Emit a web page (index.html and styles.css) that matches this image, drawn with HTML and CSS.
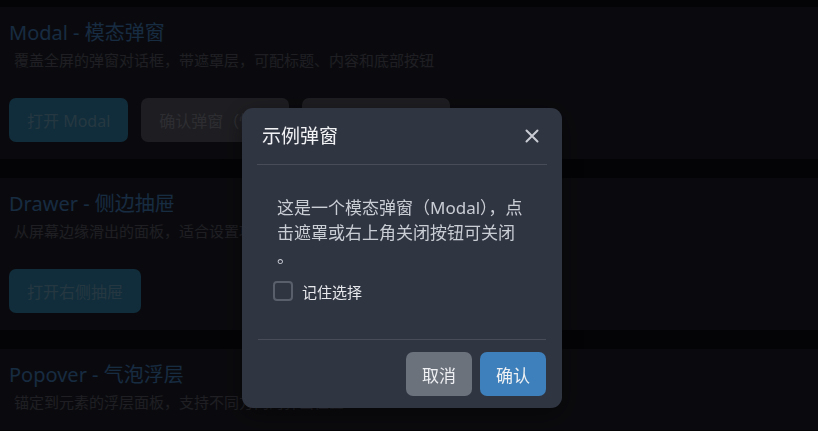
FILE: index.html
```html
<!DOCTYPE html>
<html lang="zh-CN">
<head>
<meta charset="utf-8">
<title>Overlay demo</title>
<link rel="stylesheet" href="styles.css">
</head>
<body>
<main class="page">
  <section class="card">
    <h2 class="card-title">Modal - 模态弹窗</h2>
    <p class="card-desc">覆盖全屏的弹窗对话框，带遮罩层，可配标题、内容和底部按钮</p>
    <div class="btn-row">
      <button class="btn btn-primary">打开 Modal</button>
      <button class="btn btn-muted">确认弹窗（快）</button>
      <button class="btn btn-muted">自定义页脚弹窗</button>
    </div>
  </section>
  <section class="card">
    <h2 class="card-title">Drawer - 侧边抽屉</h2>
    <p class="card-desc">从屏幕边缘滑出的面板，适合设置项、筛选条件等内容展示</p>
    <div class="btn-row">
      <button class="btn btn-primary">打开右侧抽屉</button>
    </div>
  </section>
  <section class="card">
    <h2 class="card-title">Popover - 气泡浮层</h2>
    <p class="card-desc">锚定到元素的浮层面板，支持不同方向的弹出位置</p>
  </section>
</main>

<div class="mask"></div>
<div class="modal" role="dialog">
  <div class="modal-header">
    <span class="modal-title">示例弹窗</span>
    <span class="modal-close" aria-label="关闭">
      <svg width="14" height="14" viewBox="0 0 14 14"><path d="M1.5 1.5 L12.5 12.5 M12.5 1.5 L1.5 12.5" stroke="#c9ccd3" stroke-width="2" stroke-linecap="round" fill="none"/></svg>
    </span>
  </div>
  <div class="modal-body">
    <p class="modal-text">这是一个模态弹窗（Modal），点<br>击遮罩或右上角关闭按钮可关闭<br>。</p>
    <label class="check">
      <span class="check-box"></span>
      <span class="check-label">记住选择</span>
    </label>
  </div>
  <div class="modal-footer">
    <button class="mbtn mbtn-cancel">取消</button>
    <button class="mbtn mbtn-ok">确认</button>
  </div>
</div>
</body>
</html>
```

FILE: styles.css
```css
* { box-sizing: border-box; }
html, body {
  margin: 0;
  padding: 0;
  background: #0a0a11;
  font-family: "Noto Sans", "Noto Sans CJK SC", sans-serif;
  overflow: hidden;
  height: 100%;
}
.page {
  padding-top: 7px;
  display: flex;
  flex-direction: column;
  gap: 19px;
}
.card {
  background: #1b1b24;
  padding: 12px 9px 17px;
}
.card-title {
  margin: 0;
  font-size: 20px;
  line-height: 28px;
  font-weight: 400;
  color: #3a6da2;
}
.card-desc {
  margin: 2px 0 0;
  padding-left: 5px;
  font-size: 15px;
  line-height: 22px;
  color: #4d4d58;
}
.btn-row {
  display: flex;
  gap: 13px;
  margin-top: 27px;
}
.btn {
  height: 44px;
  padding: 0 18px;
  border: none;
  border-radius: 7px;
  font-family: inherit;
  font-size: 16px;
}
.btn-primary { background: #2c7094; color: #5e8ca3; }
.btn-muted { background: #4b4b55; color: #72727c; }

.mask {
  position: fixed;
  inset: 0;
  background: rgba(0, 0, 0, 0.6);
}
.modal {
  position: fixed;
  left: 242px;
  top: 108px;
  width: 320px;
  height: 300px;
  background: #303542;
  border-radius: 11px;
  display: flex;
  flex-direction: column;
  box-shadow: 0 6px 24px rgba(0,0,0,0.4);
}
.modal-header {
  margin: 0 15px;
  height: 57px;
  padding: 0 8px 0 5px;
  display: flex;
  align-items: center;
  justify-content: space-between;
  border-bottom: 1px solid #474c58;
}
.modal-title {
  font-size: 19px;
  color: #f2f3f5;
  line-height: 27px;
}
.modal-close {
  display: flex;
  width: 14px;
  height: 14px;
}
.modal-body {
  flex: 1;
  padding: 31px 20px 0 31px;
}
.modal-text {
  margin: 0 0 11px 4px;
  font-size: 17px;
  line-height: 24.5px;
  color: #c9cdd4;
  white-space: nowrap;
}
.check {
  display: flex;
  align-items: center;
  gap: 9px;
}
.check-box {
  width: 20px;
  height: 20px;
  border: 2px solid #59606c;
  border-radius: 4px;
}
.check-label {
  font-size: 15px;
  color: #e6e8eb;
}
.modal-footer {
  margin: 0 16px;
  border-top: 1px solid #474c58;
  padding: 12px 0 12px;
  display: flex;
  justify-content: flex-end;
  gap: 8px;
}
.mbtn {
  height: 44px;
  padding: 0 16px;
  border: none;
  border-radius: 7px;
  font-family: inherit;
  font-size: 17px;
  color: #eef0f3;
}
.mbtn-cancel { background: #6c727c; }
.mbtn-ok { background: #3e80bb; }
```
